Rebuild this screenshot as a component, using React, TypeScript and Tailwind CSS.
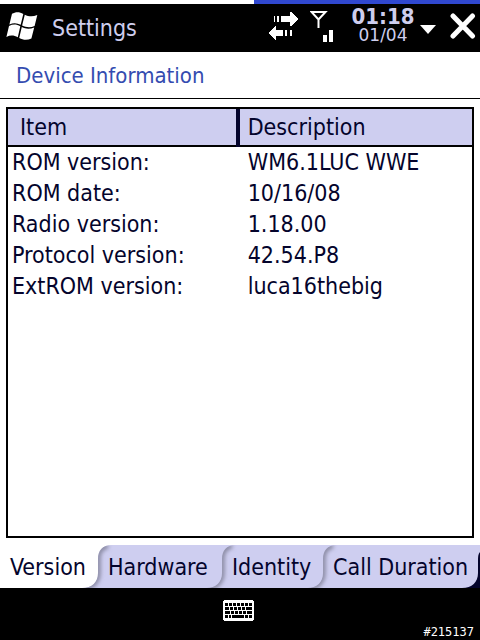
import { useState } from "react";

const ROWS = [
  { item: "ROM version:", description: "WM6.1LUC WWE" },
  { item: "ROM date:", description: "10/16/08" },
  { item: "Radio version:", description: "1.18.00" },
  { item: "Protocol version:", description: "42.54.P8" },
  { item: "ExtROM version:", description: "luca16thebig" },
];

const TABS = [
  { id: "version", name: "Version", width: "w-[98px]" },
  { id: "hardware", name: "Hardware", width: "w-[124px]" },
  { id: "identity", name: "Identity", width: "w-[101px]" },
  { id: "call-duration", name: "Call Duration", width: "flex-1" },
];

function WindowsFlag() {
  return (
    <svg viewBox="0 0 32 30" className="w-8 h-[30px] shrink-0" fill="#fff" aria-hidden="true">
      <path d="M6 2.8C9.5.6 13.5.6 17.3 2.9L14.7 13.8C11 11.8 7.2 11.6 3.4 13.6Z" />
      <path d="M18.8 3.7C22.8 5.8 26.8 5.9 31.3 4L28.6 15C24.5 17 20.2 16.6 16.1 14.6Z" />
      <path d="M3 15.1C6.8 13 10.6 13.2 14.3 15.3L11.8 26.2C8 24.2 4.2 23.9.4 26Z" />
      <path d="M15.8 16.1C19.8 18.2 24 18.4 28.2 16.4L25.4 27.5C21.4 29.5 17.2 29.2 13.2 27.1Z" />
    </svg>
  );
}

function ConnectionIcon() {
  return (
    <svg viewBox="0 0 30 28" className="w-[30px] h-7 shrink-0" fill="#fff" shapeRendering="crispEdges" aria-hidden="true">
      <path d="M6 4h1v6H6zM9 4h2v6H9zM13 4h9V0h1l7 7-7 7h-1v-4h-9z" />
      <path d="M24 18h-2v6h2zM19 18h-2v6h2zM15 18H8v-4H7l-7 7 7 7h1v-4h7z" />
    </svg>
  );
}

function SignalIcon() {
  return (
    <svg viewBox="0 0 24 32" className="w-6 h-8 shrink-0" fill="none" stroke="#fff" strokeWidth="2" aria-hidden="true">
      <path d="M1.5 2H15.5L8.5 9.500ZM8.500 9V18" />
      <path d="M13 25H17V32H13ZM19 20H23V32H19Z" fill="#fff" stroke="none" />
    </svg>
  );
}

function KeyboardIcon() {
  return (
    <svg viewBox="0 0 31 21" className="w-[31px] h-[21px]" shapeRendering="crispEdges" aria-hidden="true">
      <path d="M1 0H30V1H31V20H30V21H1V20H0V1H1Z" fill="#fff" />
      <path
        d="M2 3h3v3H2zM6 3h3v3H6zM10 3h3v3h-3zM14 3h3v3h-3zM18 3h3v3h-3zM22 3h3v3h-3zM26 3h3v3h-3zM2 7h4v3H2zM7 7h3v3H7zM11 7h3v3h-3zM15 7h3v3h-3zM19 7h3v3h-3zM23 7h6v3h-6zM2 11h5v3H2zM8 11h3v3H8zM12 11h3v3h-3zM16 11h3v3h-3zM20 11h3v3h-3zM24 11h5v3h-5zM2 15h3v3H2zM6 15h2v3H6zM9 15h12v3H9zM22 15h3v3h-3zM26 15h3v3h-3z"
        fill="#000"
      />
    </svg>
  );
}

// Curved seam where one tab tucks under the one on its left
function TabSeam({ id, light }: { id: string; light: boolean }) {
  return (
    <svg viewBox="0 0 32 43" className="absolute -left-4 top-0 w-8 h-[43px] pointer-events-none" aria-hidden="true">
      <defs>
        <filter id={`shade-${id}`} x="-50%" y="-50%" width="200%" height="200%">
          <feGaussianBlur stdDeviation="2" />
        </filter>
        <clipPath id={`under-${id}`}>
          <path d="M30 0C20 0 16 6 16 14V28C16 37 10 43 0 43H32V0Z" />
        </clipPath>
      </defs>
      {light && <path d="M16 0H32V20H16Z" fill="#fff" />}
      <path d="M30 0C20 0 16 6 16 14V28C16 37 10 43 0 43H32V0Z" fill="#cecef0" />
      <g clipPath={`url(#under-${id})`}>
        <path
          d="M26 1C19 2 16 7 16 14V28C16 37 10 43 0 43"
          fill="none"
          stroke="#84849c"
          strokeWidth="5"
          filter={`url(#shade-${id})`}
        />
      </g>
    </svg>
  );
}

export default function App() {
  const [tab, setTab] = useState("version");

  return (
    <div className="min-h-screen flex flex-col bg-white text-[#04042c] font-['DejaVu_Sans_Condensed','DejaVu_Sans',sans-serif] text-[23px] leading-[31px]">
      <div className="h-1 flex shrink-0">
        <div className="w-[53%]" />
        <div className="flex-1 bg-[#3048d0]" />
      </div>

      <header className="h-12 shrink-0 flex items-center bg-black text-[#ceceee] pl-1.5 pr-1 pb-1">
        <WindowsFlag />
        <h1 className="ml-3.5 pt-1 flex-1">Settings</h1>
        <ConnectionIcon />
        <div className="ml-3">
          <SignalIcon />
        </div>
        <div className="ml-4 w-[66px] flex flex-col items-center">
          <span className="text-[22px] leading-[18px] font-bold">01:18</span>
          <span className="text-[17px] leading-[18px] font-['DejaVu_Sans',sans-serif]">01/04</span>
        </div>
        <button type="button" aria-label="More" className="ml-1 pt-1.5">
          <svg viewBox="0 0 16 9" className="w-4 h-[9px]" fill="#fff" aria-hidden="true">
            <path d="M0 0H16L8 9Z" />
          </svg>
        </button>
        <button type="button" aria-label="Close" className="ml-3.5">
          <svg viewBox="0 0 26 26" className="w-[26px] h-[26px]" stroke="#fff" strokeWidth="5" strokeLinecap="round" aria-hidden="true">
            <path d="M3 3L22.500 23M22.500 3L3 23" />
          </svg>
        </button>
      </header>

      <h2 className="h-[47px] shrink-0 flex items-center px-4 border-b border-black text-[22px] text-[#344cb0]">
        Device Information
      </h2>

      <main className="flex-1 flex flex-col pt-2 pb-[7px] px-1.5">
        <div className="flex-1 border-2 border-black">
          <table className="w-full table-fixed border-collapse text-left">
            <thead>
              <tr className="h-[37px] bg-[#cecef0] border-b-2 border-black">
                <th className="w-[49.5%] pl-3 font-normal border-r-4 border-[#04042c] border-b-2 border-b-black">Item</th>
                <th className="pl-2 font-normal">Description</th>
              </tr>
            </thead>
            <tbody>
              {ROWS.map(({ item, description }) => (
                <tr key={item}>
                  <td className="pl-1">{item}</td>
                  <td className="pl-2.5">{description}</td>
                </tr>
              ))}
            </tbody>
          </table>
        </div>
      </main>

      <nav className="relative h-[43px] shrink-0 flex overflow-hidden bg-[#cecef0]">
        <div role="tablist" className="flex-1 flex">
          {TABS.map(({ id, name, width }, i) => (
            <button
              key={id}
              type="button"
              role="tab"
              aria-selected={tab === id}
              onClick={() => setTab(id)}
              className={`relative h-full pl-2.5 pt-0.5 text-left whitespace-nowrap ${width} ${tab === id ? "bg-white" : ""}`}
            >
              {i > 0 && <TabSeam id={id} light={TABS[i - 1].id === tab} />}
              <span className="relative">{name}</span>
            </button>
          ))}
        </div>
        <svg viewBox="0 0 18 43" className="absolute right-0 top-0 w-[18px] h-[43px] pointer-events-none" aria-hidden="true">
          <path d="M18 7C16 9 16 12 16 16V28C16 37 10 43 0 43H18Z" fill="#04042c" />
        </svg>
      </nav>

      <footer className="h-[52px] shrink-0 grid grid-cols-3 bg-black">
        <button type="button" aria-label="Keyboard" className="col-start-2 justify-self-center self-start mt-3 mr-1">
          <KeyboardIcon />
        </button>
        <span className="self-end justify-self-end pr-1.5 text-[12px] leading-4 text-white font-['DejaVu_Sans_Mono',monospace]">
          #215137
        </span>
      </footer>
    </div>
  );
}
